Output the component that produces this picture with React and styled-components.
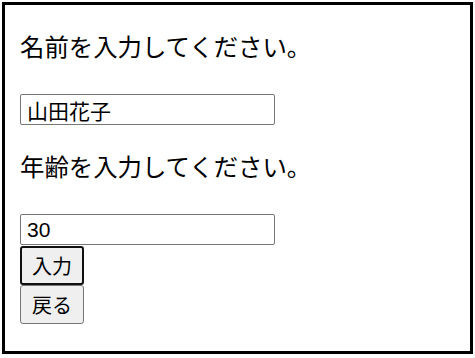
import React from "react";
import styled, { createGlobalStyle } from "styled-components";

const Global = createGlobalStyle`
  html, body { margin: 0; padding: 0; background: #fff; }
  body { font-family: "Noto Sans CJK JP", "Noto Sans", sans-serif; color: #000; }
`;

const Frame = styled.div`
  box-sizing: border-box;
  margin: 2px;
  width: 471px;
  height: 352px;
  border: 3px solid #000;
  padding: 26px 15px 0;
  display: flex;
  flex-direction: column;
  align-items: flex-start;
`;

const Prompt = styled.p`
  margin: 0 0 33px;
  font-size: 24.4px;
  line-height: 30px;
  white-space: nowrap;
`;

const Field = styled.input`
  box-sizing: border-box;
  width: 255px;
  height: 31px;
  margin: 0 0 ${(p) => p.$after}px;
  padding: 0 6px;
  border: 1px solid #767676;
  border-radius: 2px;
  font-family: "Liberation Sans", "Noto Sans CJK JP", sans-serif;
  font-size: 21px;
  color: #000;
  background: #fff;
  outline: none;
`;

const Button = styled.button`
  box-sizing: border-box;
  width: 64px;
  height: 39px;
  padding: 0;
  background: #efefef;
  border: ${(p) => (p.$focused ? "2px solid #101010" : "1px solid #767676")};
  border-radius: 3px;
  font-family: "Noto Sans CJK JP", sans-serif;
  font-size: 20px;
  color: #000;
  line-height: 1;
`;

export default function App() {
  return (
    <>
      <Global />
      <Frame>
        <Prompt>名前を入力してください。</Prompt>
        <Field $after={26} defaultValue="山田花子" />
        <Prompt>年齢を入力してください。</Prompt>
        <Field $after={1} defaultValue="30" />
        <Button $focused>入力</Button>
        <Button>戻る</Button>
      </Frame>
    </>
  );
}
